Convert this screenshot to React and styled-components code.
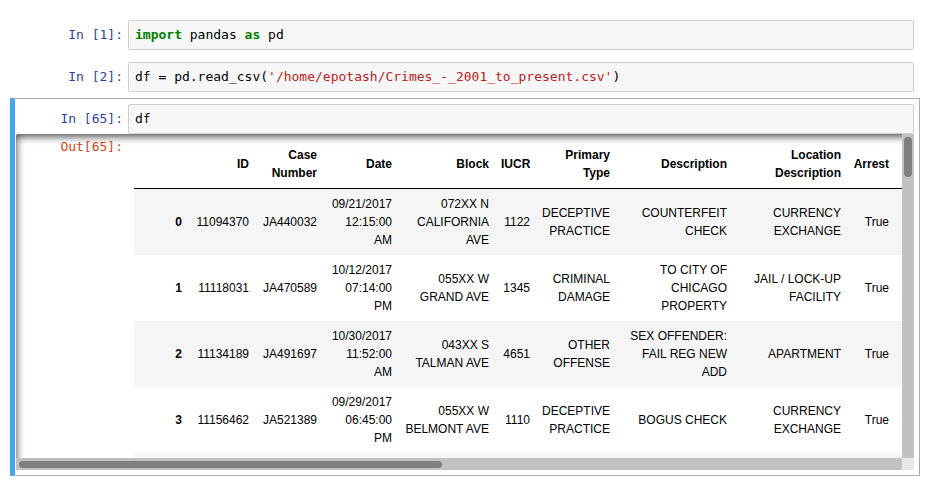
import React from "react";
import styled, { createGlobalStyle } from "styled-components";

const GlobalStyle = createGlobalStyle`
  html, body {
    margin: 0;
    padding: 0;
    background: #fff;
  }
  body {
    font-family: "Liberation Sans", Arial, sans-serif;
  }
`;

// visible columns of the frame; the last one is the start of the scrolled-off part
const columns = [
  { key: "idx", label: "", w: 54 },
  { key: "id", label: "ID", w: 67 },
  { key: "case", label: "Case Number", w: 68 },
  { key: "date", label: "Date", w: 75 },
  { key: "block", label: "Block", w: 97 },
  { key: "iucr", label: "IUCR", w: 41 },
  { key: "ptype", label: "Primary Type", w: 80 },
  { key: "desc", label: "Description", w: 117 },
  { key: "loc", label: "Location Description", w: 114 },
  { key: "arrest", label: "Arrest", w: 48 },
  { key: "rest", label: "", w: 40 },
];

const rows = [
  ["0", "11094370", "JA440032", "09/21/2017 12:15:00 AM", "072XX N CALIFORNIA AVE", "1122", "DECEPTIVE PRACTICE", "COUNTERFEIT CHECK", "CURRENCY EXCHANGE", "True", ""],
  ["1", "11118031", "JA470589", "10/12/2017 07:14:00 PM", "055XX W GRAND AVE", "1345", "CRIMINAL DAMAGE", "TO CITY OF CHICAGO PROPERTY", "JAIL / LOCK-UP FACILITY", "True", ""],
  ["2", "11134189", "JA491697", "10/30/2017 11:52:00 AM", "043XX S TALMAN AVE", "4651", "OTHER OFFENSE", "SEX OFFENDER: FAIL REG NEW ADD", "APARTMENT", "True", ""],
  ["3", "11156462", "JA521389", "09/29/2017 06:45:00 PM", "055XX W BELMONT AVE", "1110", "DECEPTIVE PRACTICE", "BOGUS CHECK", "CURRENCY EXCHANGE", "True", ""],
  // next row only peeks in above the scrollbar
  ["", "", "", "", "", "", "", "", "", "", ""],
];

const tableWidth = columns.reduce((s, c) => s + c.w, 0);

export default function App() {
  return (
    <>
      <GlobalStyle />
      <Notebook>
        <Cell>
          <InputRow>
            <Prompt>In&nbsp;[1]:</Prompt>
            <InputArea>
              <Keyword>import</Keyword> pandas <Keyword>as</Keyword> pd
            </InputArea>
          </InputRow>
        </Cell>
        <Cell>
          <InputRow>
            <Prompt>In&nbsp;[2]:</Prompt>
            <InputArea>
              df = pd.read_csv(<Str>'/home/epotash/Crimes_-_2001_to_present.csv'</Str>)
            </InputArea>
          </InputRow>
        </Cell>
        <Cell $selected>
          <InputRow>
            <Prompt>In&nbsp;[65]:</Prompt>
            <InputArea>df</InputArea>
          </InputRow>
          <OutputScroll>
            <Viewport>
              <OutputRow>
                <Prompt $out>Out[65]:</Prompt>
                <Subarea>
                  <Table style={{ width: tableWidth }}>
                    <colgroup>
                      {columns.map((c) => (
                        <Col key={c.key} $w={c.w} />
                      ))}
                    </colgroup>
                    <thead>
                      <tr>
                        {columns.map((c) => (
                          <HeadCell key={c.key}>{c.label}</HeadCell>
                        ))}
                      </tr>
                    </thead>
                    <tbody>
                      {rows.map((r, i) => (
                        <Row key={i} $striped={i % 2 === 0}>
                          <IndexCell>{r[0]}</IndexCell>
                          {r.slice(1).map((v, j) => (
                            <DataCell key={j}>{v}</DataCell>
                          ))}
                        </Row>
                      ))}
                    </tbody>
                  </Table>
                </Subarea>
              </OutputRow>
            </Viewport>
            <VTrack>
              <VThumb />
            </VTrack>
            <HTrack>
              <HThumb />
            </HTrack>
            <Corner />
          </OutputScroll>
        </Cell>
      </Notebook>
    </>
  );
}

const Notebook = styled.div`
  padding: 14px 0 0 10px;
  width: 910px;
`;

const Cell = styled.div`
  box-sizing: border-box;
  border: 1px solid ${(p) => (p.$selected ? "#ababab" : "transparent")};
  border-left: ${(p) => (p.$selected ? "5px solid #42a5f5" : "1px solid transparent")};
  padding: 5px 5px 5px ${(p) => (p.$selected ? "1px" : "5px")};
`;

const InputRow = styled.div`
  display: flex;
`;

const Prompt = styled.div`
  flex: 0 0 112px;
  box-sizing: border-box;
  padding: ${(p) => (p.$out ? "5px" : "7px")} 5px 0 0;
  text-align: right;
  font: 13px/16px "DejaVu Sans Mono", monospace;
  color: ${(p) => (p.$out ? "#d84315" : "#303f9f")};
  white-space: nowrap;
`;

const InputArea = styled.div`
  flex: 1;
  border: 1px solid #cfcfcf;
  border-radius: 2px;
  background: #f7f7f7;
  padding: 6px;
  font: 13px/16px "DejaVu Sans Mono", monospace;
  color: #000;
  white-space: pre;
`;

const Keyword = styled.span`
  color: #008000;
  font-weight: bold;
`;

const Str = styled.span`
  color: #ba2121;
`;

const OutputScroll = styled.div`
  display: grid;
  grid-template-columns: minmax(0, 1fr) 12px;
  grid-template-rows: minmax(0, 1fr) 12px;
  height: 336px;
  border-radius: 2px;
  box-shadow: inset 0 2px 8px rgba(0, 0, 0, 0.8);
`;

const Viewport = styled.div`
  overflow: hidden;
  min-width: 0;
`;

const OutputRow = styled.div`
  display: flex;
  width: max-content;
`;

const Subarea = styled.div`
  padding: 6px 6px 5px;
`;

const Table = styled.table`
  border-collapse: collapse;
  table-layout: fixed;
  font-family: "Liberation Sans", Arial, sans-serif;
  font-size: 12px;
  line-height: 18px;
  color: #000;
`;

const Col = styled.col`
  width: ${(p) => p.$w}px;
`;

const HeadCell = styled.th`
  padding: 6px;
  text-align: right;
  vertical-align: middle;
  font-weight: bold;
  border-bottom: 1px solid #000;
`;

const Row = styled.tr`
  height: 66px;
  background: ${(p) => (p.$striped ? "#f5f5f5" : "#fff")};
`;

const IndexCell = styled.th`
  padding: 6px;
  text-align: right;
  vertical-align: middle;
  font-weight: bold;
`;

const DataCell = styled.td`
  padding: 6px;
  text-align: right;
  vertical-align: middle;
`;

const VTrack = styled.div`
  background: #c1c1c1;
  padding: 3px 2px 0 2px;
`;

const VThumb = styled.div`
  height: 40px;
  background: #7f7f7f;
  border-radius: 4px;
`;

const HTrack = styled.div`
  display: flex;
  align-items: center;
  background: #c1c1c1;
  padding: 0 3px;
`;

const HThumb = styled.div`
  width: 423px;
  height: 7px;
  background: #7f7f7f;
  border-radius: 4px;
`;

const Corner = styled.div`
  background: #e8e8e8;
`;
